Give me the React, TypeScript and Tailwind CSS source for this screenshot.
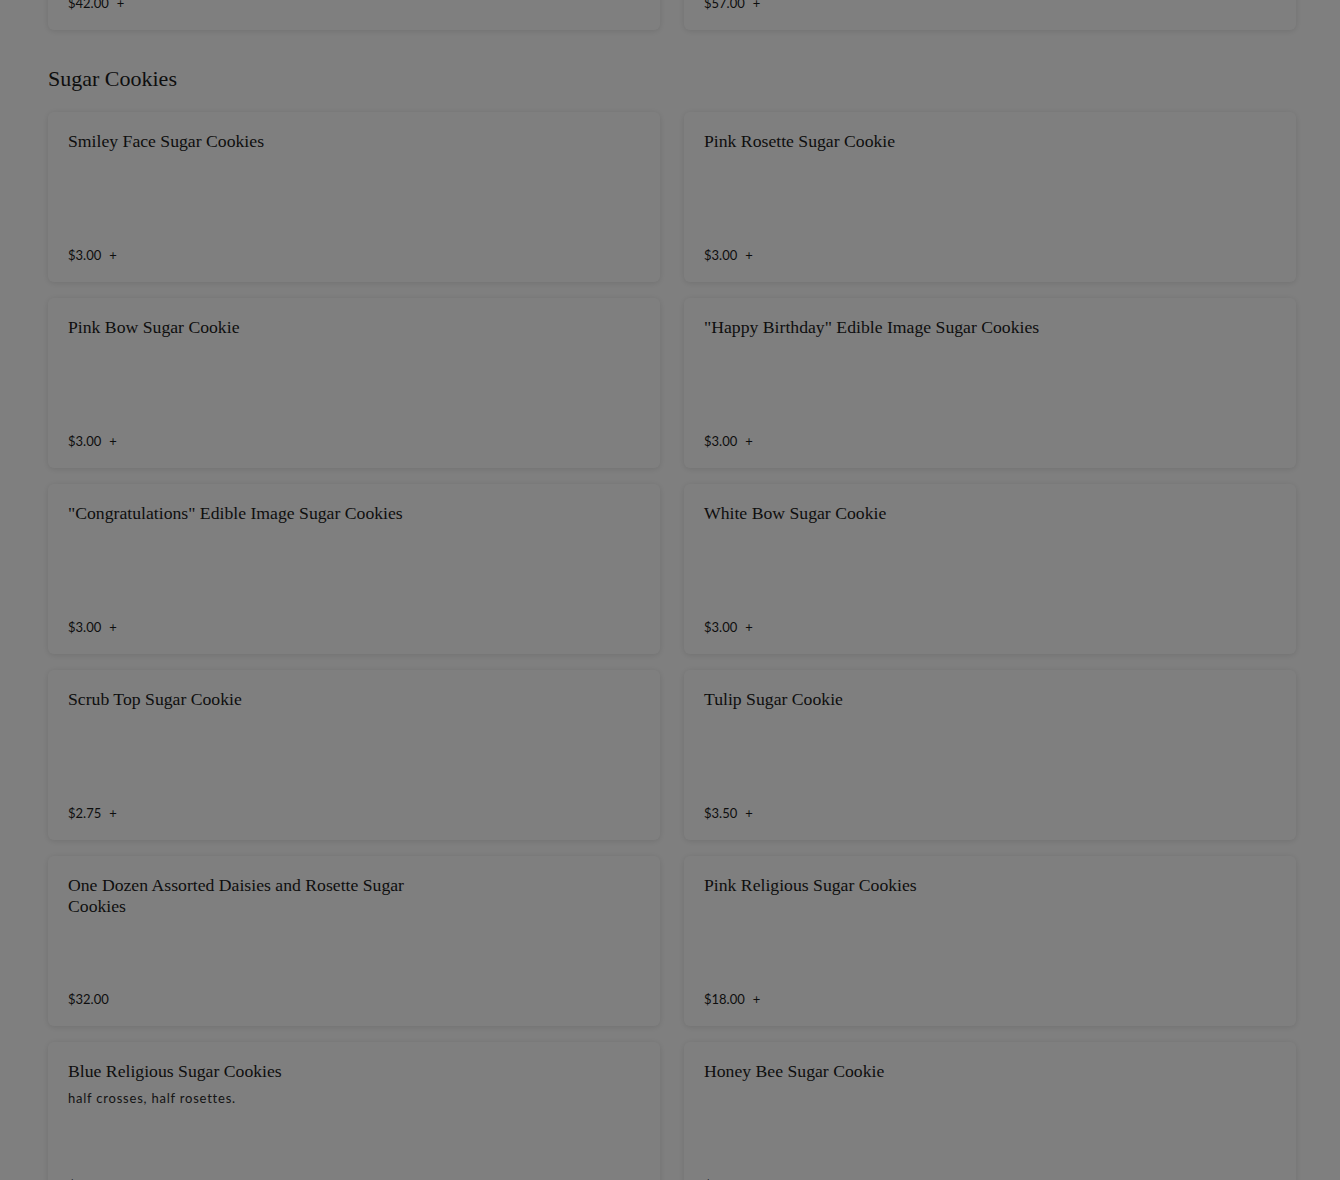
import React from "react";

type Item = { title: string; price: string; plus?: boolean; desc?: string };

const rows: Item[][] = [
  [
    { title: "Smiley Face Sugar Cookies", price: "$3.00", plus: true },
    { title: "Pink Rosette Sugar Cookie", price: "$3.00", plus: true },
  ],
  [
    { title: "Pink Bow Sugar Cookie", price: "$3.00", plus: true },
    { title: "\"Happy Birthday\" Edible Image Sugar Cookies", price: "$3.00", plus: true },
  ],
  [
    { title: "\"Congratulations\" Edible Image Sugar Cookies", price: "$3.00", plus: true },
    { title: "White Bow Sugar Cookie", price: "$3.00", plus: true },
  ],
  [
    { title: "Scrub Top Sugar Cookie", price: "$2.75", plus: true },
    { title: "Tulip Sugar Cookie", price: "$3.50", plus: true },
  ],
  [
    { title: "One Dozen Assorted Daisies and Rosette Sugar Cookies", price: "$32.00" },
    { title: "Pink Religious Sugar Cookies", price: "$18.00", plus: true },
  ],
  [
    { title: "Blue Religious Sugar Cookies", price: "$18.00", plus: true, desc: "half crosses, half rosettes." },
    { title: "Honey Bee Sugar Cookie", price: "$3.00", plus: true },
  ],
];

const serif = { fontFamily: '"Liberation Serif", "DejaVu Serif", serif' };
const sans = { fontFamily: 'Lato, "Noto Sans", sans-serif' };

function Card({ item }: { item: Item }) {
  return (
    <div className="h-[170px] rounded-md bg-white px-5 pt-[19px] pb-[19px] shadow-[0_1px_6px_rgba(0,0,0,0.12)] flex flex-col justify-between">
      <div className="max-w-[380px]">
        <div className="text-[17.7px] leading-[21px] text-[#1c1c1c]" style={serif}>
          {item.title}
        </div>
        {item.desc && (
          <div className="mt-[8px] text-[13px] leading-[16px] tracking-[0.06em] text-[#2a2a2a]" style={sans}>
            {item.desc}
          </div>
        )}
      </div>
      <div className="flex items-center gap-2 text-[13px] leading-[16px] text-[#1c1c1c]" style={sans}>
        <span>{item.price}</span>
        {item.plus && <span>+</span>}
      </div>
    </div>
  );
}

export default function App() {
  return (
    <div className="relative min-h-[1180px] overflow-hidden bg-white">
      <div className="pl-12 pr-11 -mt-[140px]">
        <div className="grid grid-cols-2 gap-x-6">
          <Card item={{ title: "Assorted Cookie Tray", price: "$42.00", plus: true }} />
          <Card item={{ title: "Large Cookie Tray", price: "$57.00", plus: true }} />
        </div>
        <h2 className="mt-[34px] mb-[18px] text-[22px] leading-[30px] text-[#1c1c1c]" style={serif}>
          Sugar Cookies
        </h2>
        <div className="grid grid-cols-2 gap-x-6 gap-y-4">
          {rows.map((r, i) => (
            <React.Fragment key={i}>
              <Card item={r[0]} />
              <Card item={r[1]} />
            </React.Fragment>
          ))}
        </div>
      </div>
      <div className="fixed inset-0 bg-black/50" />
    </div>
  );
}
